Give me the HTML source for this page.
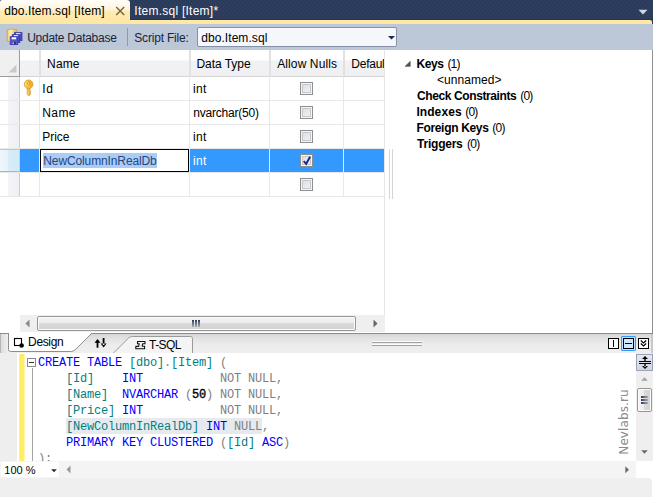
<!DOCTYPE html>
<html><head><meta charset="utf-8"><title>dbo.Item.sql [Item]</title>
<style>
html,body{margin:0;padding:0;}
body{width:653px;height:497px;overflow:hidden;background:#fff;position:relative;font-family:"Liberation Sans",sans-serif;font-size:12px;color:#000;}
#root{position:absolute;left:0;top:0;width:653px;height:497px;overflow:hidden;}
.a{position:absolute;}
.t{position:absolute;white-space:nowrap;line-height:14px;height:14px;font-size:12px;}
.b{font-weight:bold;}
/* top tabs */
#tabbar{left:0;top:0;width:653px;height:24px;background-color:#2b3b5c;}
#tab1{left:0;top:0;width:130px;height:20px;background:linear-gradient(#fffdf8 0,#fff9ea 25%,#fff3d6 50%,#ffeab2 55%,#ffe8a6 100%);border-top-right-radius:3px;border-top-left-radius:2px;}
#ystrip{left:0;top:20px;width:652px;height:4px;background:#ffe8a6;border-top-right-radius:2px;}
#toolbar{left:0;top:24px;width:653px;height:26px;background:#bcc7d8;}
#combo{left:197px;top:27px;width:198px;height:18px;border:1px solid #8591a8;background:#f5f7fb;border-radius:2px;}
/* grid */
.hl{position:absolute;height:1px;background:#e8e8e8;}
.vl{position:absolute;width:1px;background:#e8e8e8;}
.cb{position:absolute;width:11px;height:11px;border:1px solid #8e8f8f;background:#f4f4f4;box-shadow:inset 0 0 0 1px #f4f4f4, inset 0 0 0 2px #c4c7cb;background:linear-gradient(135deg,#d8dbdf,#f6f6f6);}
/* code */
.c{position:absolute;left:37.9px;white-space:pre;font-family:"Liberation Mono",monospace;font-size:12px;letter-spacing:-0.2px;line-height:16px;height:16px;}
.k{color:#0000ff}.i{color:#008080}.g{color:#808080}
</style></head><body><div id="root">

<!-- top document tabs -->
<div class="a" id="tabbar"></div>
<svg class="a" style="left:0;top:0" width="653" height="20" viewBox="0 0 653 20"><defs><pattern id="dots" width="4" height="4" patternUnits="userSpaceOnUse"><rect width="4" height="4" fill="#2b3b5c"/><rect x="1" y="1" width="1" height="1" fill="#35486c"/><rect x="3" y="3" width="1" height="1" fill="#35486c"/></pattern></defs><rect width="653" height="20" fill="url(#dots)"/><rect y="19" width="653" height="1" fill="#24355b"/></svg>
<div class="a" id="tab1"></div>
<div class="a" id="ystrip"></div>
<span class="t" id="t1" style="left:4.2px;top:4px;letter-spacing:0.1px;">dbo.Item.sql [Item]</span>
<svg class="a" style="left:115px;top:6px" width="11" height="10" viewBox="0 0 11 10"><path d="M1.2 1 L9.2 9 M9.2 1 L1.2 9" stroke="#75643f" stroke-width="1.4" fill="none"/></svg>
<span class="t" id="t2" style="left:134.3px;top:4px;color:#fff;letter-spacing:0.25px;">Item.sql [Item]*</span>
<svg class="a" style="left:638px;top:9px" width="10" height="6" viewBox="0 0 10 6"><path d="M0.5 0.8 H9.5 L5 5.4 Z" fill="#ced6e4"/></svg>

<!-- toolbar -->
<div class="a" id="toolbar"></div>
<svg class="a" style="left:6px;top:28px" width="18" height="18" viewBox="6 28 18 18">
  <defs><linearGradient id="cy" x1="0" y1="0" x2="1" y2="0"><stop offset="0" stop-color="#f6c85a"/><stop offset="0.35" stop-color="#fff0b4"/><stop offset="1" stop-color="#e9b23a"/></linearGradient></defs>
  <path d="M7.2 29.6 Q12 28.6 16.8 29.6 V41 Q12 43.6 7.2 41 Z" fill="url(#cy)" stroke="#d1a03a" stroke-width="0.8"/>
  <g transform="translate(0,-0.4)">
   <rect x="14.5" y="33" width="7.5" height="8" fill="#4b4dc4" stroke="#3a3aa6" stroke-width="0.8"/>
   <rect x="16" y="33.6" width="4.2" height="1.8" fill="#fff"/>
   <rect x="12.3" y="35" width="7.5" height="8" fill="#4b4dc4" stroke="#3a3aa6" stroke-width="0.8"/>
   <rect x="13.8" y="35.6" width="4.2" height="1.8" fill="#fff"/>
   <rect x="10.2" y="37" width="7.6" height="8" fill="#5557cc" stroke="#3a3aa6" stroke-width="0.8"/>
   <rect x="11.7" y="37.7" width="4.4" height="2" fill="#fff"/>
   <rect x="11.9" y="42.2" width="4" height="2.4" fill="#2a2c86"/>
   <rect x="12.4" y="42.8" width="1.6" height="1.4" fill="#dfe3f5"/>
  </g>
</svg>
<span class="t" id="t3" style="left:27.2px;top:31px;color:#1b2436;letter-spacing:-0.27px;">Update Database</span>
<div class="a" style="left:127px;top:28px;width:1px;height:18px;background:#8d99ad;"></div>
<span class="t" id="t4" style="left:134.3px;top:31px;color:#1b2436;letter-spacing:-0.2px;">Script File:</span>
<div class="a" id="combo"></div>
<span class="t" id="t5" style="left:201.2px;top:31px;letter-spacing:0.07px;">dbo.Item.sql</span>
<svg class="a" style="left:388px;top:36px" width="7" height="4" viewBox="0 0 7 4"><path d="M0 0 H7 L3.5 3.6 Z" fill="#1b2a47"/></svg>

<!-- designer area -->
<div class="a" style="left:0;top:50px;width:652px;height:283px;background:#fff;"></div>
<div class="a" style="left:652px;top:50px;width:1px;height:283px;background:#8f8f8f;"></div>

<!-- grid header -->
<div class="a" style="left:0;top:50px;width:384px;height:26px;background:linear-gradient(#ffffff 0,#ffffff 38%,#f2f2f5 42%,#f0f0f3 100%);"></div>
<div class="a" style="left:0;top:50px;width:19px;height:26px;background:#f0f0f0;border-right:1px solid #9c9c9c;border-bottom:1px solid #9c9c9c;box-sizing:border-box;width:20px;height:27px;"></div>
<svg class="a" style="left:8px;top:64px" width="9" height="9" viewBox="0 0 9 9"><path d="M8.5 0.5 V8.5 H0.5 Z" fill="#c9c9c9"/></svg>
<div class="hl" style="left:20px;top:76px;width:364px;background:#d5d5d5;"></div>
<!-- row header column -->
<div class="a" style="left:0;top:77px;width:19px;height:119px;background:linear-gradient(90deg,#ffffff 0,#ffffff 40%,#f3f4f6 44%,#eff0f3 100%);"></div>
<div class="vl" style="left:19px;top:77px;height:120px;background:#cdcdcd;"></div>
<!-- vertical column lines -->
<div class="vl" style="left:39px;top:50px;height:147px;"></div>
<div class="vl" style="left:189px;top:50px;height:147px;"></div>
<div class="vl" style="left:269px;top:50px;height:147px;"></div>
<div class="vl" style="left:343px;top:50px;height:147px;"></div>
<div class="a" style="left:39px;top:50px;width:2px;height:26px;background:#e1e1e4;"></div><div class="a" style="left:189px;top:50px;width:2px;height:26px;background:#e1e1e4;"></div><div class="a" style="left:269px;top:50px;width:2px;height:26px;background:#e1e1e4;"></div><div class="a" style="left:343px;top:50px;width:2px;height:26px;background:#e1e1e4;"></div>
<div class="vl" style="left:384px;top:50px;height:265px;background:#e6e6e6;"></div>
<!-- row lines -->
<div class="hl" style="left:0;top:100px;width:384px;"></div>
<div class="hl" style="left:0;top:124px;width:384px;"></div>
<div class="hl" style="left:0;top:148px;width:384px;"></div>
<div class="hl" style="left:0;top:172px;width:384px;"></div>
<div class="hl" style="left:0;top:196px;width:384px;"></div>

<!-- selected row -->
<div class="a" style="left:0;top:149px;width:19px;height:23px;background:linear-gradient(90deg,#eef7fd 0,#e6f3fb 40%,#d6ecf8 45%,#d3eaf7 100%);border-top:1px solid #9ad2f2;border-bottom:1px solid #7cc3ee;box-sizing:border-box;"></div>
<div class="a" style="left:20px;top:149px;width:19px;height:23px;background:#3399ff;"></div>
<div class="a" style="left:190px;top:149px;width:79px;height:23px;background:#3399ff;"></div>
<div class="a" style="left:270px;top:149px;width:73px;height:23px;background:#3399ff;"></div>
<div class="a" style="left:344px;top:149px;width:40px;height:23px;background:#3399ff;"></div>
<div class="a" style="left:40px;top:149px;width:149px;height:23px;border:1px solid #000;background:#fff;box-sizing:border-box;"></div>
<div class="a" style="left:43px;top:153px;width:114px;height:15px;background:#a9cdf6;"></div>

<!-- header text -->
<span class="t" id="h1" style="left:47.1px;top:57px;letter-spacing:0.12px;">Name</span>
<span class="t" id="h2" style="left:196.4px;top:57px;letter-spacing:-0.04px;">Data Type</span>
<span class="t" id="h3" style="left:277.2px;top:57px;letter-spacing:0.11px;">Allow Nulls</span>
<div class="a" style="left:345px;top:51px;width:39px;height:25px;overflow:hidden;"><span class="t" id="h4" style="left:6.3px;top:6px;letter-spacing:-0.25px;">Default Value</span></div>

<!-- key icon -->
<svg class="a" style="left:22px;top:79px" width="14" height="19" viewBox="22 79 14 19">
  <defs><linearGradient id="kg" x1="0" y1="0" x2="1" y2="0"><stop offset="0" stop-color="#ffdf7e"/><stop offset="0.5" stop-color="#fbbd2c"/><stop offset="1" stop-color="#f0a81c"/></linearGradient></defs>
  <path d="M27.2 88.3 V94.3 L28.6 95.9 L29.9 94.9 V94 L31 93.4 L29.9 92.7 V92.2 L31 91.5 L29.9 90.9 V88.3 Z" fill="url(#kg)" stroke="#cf9422" stroke-width="0.7"/>
  <circle cx="28.6" cy="84.3" r="4.3" fill="url(#kg)" stroke="#d59a26" stroke-width="0.8"/>
  <circle cx="28.6" cy="83.2" r="1.05" fill="#fffdf0" stroke="#8a6414" stroke-width="0.5"/>
</svg>

<!-- rows text -->
<span class="t" id="r1" style="left:42.2px;top:82px;letter-spacing:0.7px;">Id</span>
<span class="t" id="r2" style="left:42.2px;top:106px;letter-spacing:0.45px;">Name</span>
<span class="t" id="r3" style="left:42.2px;top:130px;letter-spacing:0px;">Price</span>
<span class="t" id="r4" style="left:43.3px;top:154px;color:#27457f;letter-spacing:-0.12px;">NewColumnInRealDb</span>
<span class="t" id="d1" style="left:193.1px;top:82px;letter-spacing:0.3px;">int</span>
<span class="t" id="d2" style="left:193.2px;top:106px;letter-spacing:-0.2px;">nvarchar(50)</span>
<span class="t" id="d3" style="left:193.1px;top:130px;letter-spacing:0.3px;">int</span>
<span class="t" id="d4" style="left:193.1px;top:154px;color:#fff;letter-spacing:0.3px;">int</span>

<!-- checkboxes -->
<div class="cb" style="left:300px;top:82px;"></div>
<div class="cb" style="left:300px;top:106px;"></div>
<div class="cb" style="left:300px;top:130px;"></div>
<div class="cb" style="left:300px;top:154px;"></div>
<svg class="a" style="left:302px;top:156px" width="10" height="10" viewBox="0 0 10 10"><path d="M1.7 5.1 L4.2 7.8 L8.1 0.8" stroke="#22228c" stroke-width="1.9" fill="none"/></svg>
<div class="cb" style="left:300px;top:178px;"></div>

<!-- splitter grip -->
<div class="a" style="left:389px;top:149px;width:1px;height:50px;background:#d4d4da;"></div>
<div class="a" style="left:392px;top:149px;width:1px;height:50px;background:#d4d4da;"></div>

<!-- right tree -->
<svg class="a" style="left:404px;top:60px" width="8" height="8" viewBox="0 0 8 8"><path d="M6.2 1.4 V6.3 H1.2 Z" fill="#555" stroke="#3c3c3c" stroke-width="0.6"/></svg>
<span class="t b" id="k1" style="left:416.4px;top:57px;letter-spacing:-0.4px;">Keys</span><span class="t" id="k1n" style="left:447.4px;top:57px;letter-spacing:-0.8px;">(1)</span>
<span class="t" id="k2" style="left:437px;top:72.5px;letter-spacing:0.05px;">&lt;unnamed&gt;</span>
<span class="t b" id="k3" style="left:417.1px;top:88.5px;letter-spacing:-0.4px;">Check Constraints</span><span class="t" id="k3n" style="left:520.2px;top:88.5px;letter-spacing:-0.8px;">(0)</span>
<span class="t b" id="k4" style="left:416.4px;top:104.5px;letter-spacing:0.08px;">Indexes</span><span class="t" id="k4n" style="left:465.3px;top:104.5px;letter-spacing:-0.8px;">(0)</span>
<span class="t b" id="k5" style="left:416.4px;top:120.5px;letter-spacing:-0.32px;">Foreign Keys</span><span class="t" id="k5n" style="left:492.2px;top:120.5px;letter-spacing:-0.7px;">(0)</span>
<span class="t b" id="k6" style="left:417.1px;top:136.5px;letter-spacing:-0.24px;">Triggers</span><span class="t" id="k6n" style="left:467px;top:136.5px;letter-spacing:-0.7px;">(0)</span>

<!-- grid horizontal scrollbar -->
<div class="a" style="left:20px;top:315px;width:365px;height:17px;background:#efefef;"></div>
<svg class="a" style="left:25px;top:319px" width="5" height="9" viewBox="0 0 5 9"><path d="M4.5 0.5 V8.5 L0.5 4.5 Z" fill="#888"/></svg>
<svg class="a" style="left:373px;top:319px" width="5" height="9" viewBox="0 0 5 9"><path d="M0.5 0.5 V8.5 L4.5 4.5 Z" fill="#666"/></svg>
<div class="a" style="left:37px;top:316px;width:319px;height:15px;box-sizing:border-box;border:1px solid #979797;border-radius:2px;background:linear-gradient(#f4f4f4,#ececec 45%,#dadada 50%,#d2d2d2);box-shadow:inset 0 0 0 1px #fafafa;"></div>
<div class="a" style="left:192px;top:320px;width:2px;height:7px;background:linear-gradient(#2c3856,#7b8090 60%,#a9acb4);"></div><div class="a" style="left:195px;top:320px;width:2px;height:7px;background:linear-gradient(#2c3856,#7b8090 60%,#a9acb4);"></div><div class="a" style="left:198px;top:320px;width:2px;height:7px;background:linear-gradient(#2c3856,#7b8090 60%,#a9acb4);"></div>

<!-- bottom border of designer -->


<!-- designer/T-SQL tab strip -->
<div class="a" style="left:0;top:333px;width:653px;height:20px;background:linear-gradient(#8c8c8c 0,#8c8c8c 1px,#d6d6d6 1px,#e2e2e2 5px,#ececec 12px,#efefef 20px);"></div>
<svg class="a" style="left:0;top:333px" width="210" height="20" viewBox="0 0 210 20">
  <defs><linearGradient id="lg1" x1="0" y1="0" x2="1" y2="0"><stop offset="0" stop-color="#9a9a9a"/><stop offset="0.15" stop-color="#dcdcdc"/><stop offset="1" stop-color="#f0f0f0"/></linearGradient></defs>
  <rect x="0" y="1" width="8" height="19" fill="url(#lg1)"/>
  <path d="M8 -1 H92.4 L76.3 15.4 Q74 18 71 18.5 H10.5 Q8.5 18.5 8.5 16.5 Z" fill="#fff" stroke="none"/>
  <path d="M8.5 -1 V16.5 Q8.5 18.5 10.5 18.5 H71.5 Q74 18.3 76.2 15.8 L92 0" fill="none" stroke="#8e8e8e" stroke-width="1"/>
  <path d="M112.5 21 L128.6 5 Q130 3.5 132.5 3.5 H190.5 Q192.5 3.5 192.5 5.5 V21 Z" fill="#f4f4f5"/>
  <path d="M112.5 21 L128.6 5 Q130 3.5 132.5 3.5 H190.5 Q192.5 3.5 192.5 5.5 V21" fill="none" stroke="#9a9a9a" stroke-width="1"/>
  <!-- design icon -->
  <rect x="14.5" y="5.5" width="7" height="7" fill="#fff" stroke="#000" stroke-width="1.1"/>
  <circle cx="21.6" cy="12.5" r="2.3" fill="#000"/>
  <!-- swap arrows -->
  <path d="M96.6 8 H98.4 V14.8 H96.6 Z M94.5 9.8 L97.5 5.9 L100.5 9.8 Z" fill="#000"/>
  <path d="M102.7 5.1 H104.5 V12 H102.7 Z M100.6 10.5 L103.6 14.4 L106.6 10.5 Z" fill="#000"/>
  <!-- tsql icon -->
  <path d="M137.5 8.5 H145 V10.8 H142.6 L142.2 13.2 H144.6 V15.8 H135.8 V13.4 H138.6 L139.2 10.8 H137.5 Z" fill="#f2f2f2" stroke="#111" stroke-width="1.1" stroke-linejoin="round"/>
</svg>
<span class="t" id="b1" style="left:28.1px;top:335px;letter-spacing:-0.36px;">Design</span>
<span class="t" id="b2" style="left:149.1px;top:338px;letter-spacing:-0.6px;">T-SQL</span>
<!-- splitter grip horizontal -->
<div class="a" style="left:372px;top:341px;width:50px;height:1px;background:#fbfbfb;"></div><div class="a" style="left:372px;top:342px;width:50px;height:1px;background:#a2a2a2;"></div>
<div class="a" style="left:372px;top:344px;width:50px;height:1px;background:#fbfbfb;"></div><div class="a" style="left:372px;top:345px;width:50px;height:1px;background:#a2a2a2;"></div>
<div class="a" style="left:651px;top:334px;width:2px;height:19px;background:#c8c8c8;"></div>
<!-- pane buttons -->
<div class="a" style="left:608px;top:338px;width:11px;height:11px;box-sizing:border-box;border:1px solid #000;background:#fff;"></div>
<div class="a" style="left:613px;top:340px;width:1px;height:7px;background:#000;"></div>
<div class="a" style="left:621px;top:336px;width:15px;height:15px;box-sizing:border-box;border:1px solid #3399ff;background:#c4e0ff;border-radius:1px;"></div>
<div class="a" style="left:623px;top:338px;width:11px;height:11px;box-sizing:border-box;border:1px solid #000;background:#cfe6ff;"></div>
<div class="a" style="left:625px;top:343px;width:7px;height:1px;background:#000;"></div>
<div class="a" style="left:638px;top:338px;width:11px;height:11px;box-sizing:border-box;border:1px solid #000;background:#fff;"></div>
<svg class="a" style="left:640px;top:340px" width="7" height="7" viewBox="0 0 7 7"><path d="M0.8 0.5 L3.5 3 L6.2 0.5 M0.8 3.5 L3.5 6 L6.2 3.5" stroke="#000" stroke-width="1.2" fill="none"/></svg>

<!-- code editor -->
<div class="a" style="left:0;top:353px;width:636px;height:108px;background:#fff;"></div>
<div class="a" style="left:0;top:353px;width:17px;height:108px;background:#eeeeef;"></div>
<div class="a" style="left:19px;top:354px;width:6px;height:107px;background:linear-gradient(90deg,#f3eba6 0,#f3eba6 1px,#ffee62 1px,#ffee62 5px,#fff7b0 5px);"></div>
<div class="a" style="left:27px;top:358px;width:9px;height:9px;box-sizing:border-box;border:1px solid #8a8a8a;background:#fff;"></div>
<div class="a" style="left:29px;top:362px;width:5px;height:1px;background:#333;"></div>
<div class="a" style="left:32px;top:368px;width:1px;height:93px;background:#a5a5a5;"></div>
<div class="a" style="left:66px;top:418px;width:196px;height:16px;background:#e6eaee;"></div>
<div class="a" style="left:0;top:353px;width:636px;height:108px;overflow:hidden;">
<div class="c" style="top:2px;"><span class="k">CREATE TABLE</span> <span class="i">[dbo]</span><span class="g">.</span><span class="i">[Item]</span> <span class="g">(</span></div>
<div class="c" style="top:18px;">    <span class="i">[Id]</span>    <span class="k">INT</span>           <span class="g">NOT NULL,</span></div>
<div class="c" style="top:34px;">    <span class="i">[Name]</span>  <span class="k">NVARCHAR</span> <span class="g">(</span><span style="-webkit-text-stroke:0.35px #000;">50</span><span class="g">)</span> <span class="g">NOT NULL,</span></div>
<div class="c" style="top:50px;">    <span class="i">[Price]</span> <span class="k">INT</span>           <span class="g">NOT NULL,</span></div>
<div class="c" style="top:66px;">    <span class="i">[NewColumnInRealDb]</span> <span class="k">INT</span> <span class="g">NULL,</span></div>
<div class="c" style="top:82px;">    <span class="k">PRIMARY KEY CLUSTERED</span> <span class="g">(</span><span class="i">[Id]</span> <span class="k">ASC</span><span class="g">)</span></div>
<div class="c" style="top:98px;"><span class="g">);</span></div>
</div>
<!-- watermark -->
<div class="a" style="left:624px;top:422px;width:0;height:0;"><span class="t" id="wm" style="left:0;top:0;transform:translate(-50%,-50%) rotate(-90deg);font-family:'DejaVu Sans',sans-serif;font-size:12px;color:#8a8a8a;letter-spacing:0.1px;">Nevlabs.ru</span></div>

<!-- vertical scrollbar -->
<div class="a" style="left:636px;top:353px;width:17px;height:108px;background:#efefef;"></div>
<div class="a" style="left:636px;top:354px;width:17px;height:17px;box-sizing:border-box;border:1px solid #9aa2b8;background:linear-gradient(#e3e7ef,#d0d6e3);"></div>
<svg class="a" style="left:637px;top:355px" width="16" height="15" viewBox="0 0 16 15"><path d="M2 6.5 H14 M2 8.5 H14" stroke="#000" stroke-width="1" fill="none"/><path d="M7.3 3 H8.7 V6 H7.3 Z M7.3 9 H8.7 V12 H7.3 Z M5 4 L8 0.9 L11 4 Z M5 11 L8 14.1 L11 11 Z" fill="#000"/></svg>
<svg class="a" style="left:641px;top:377px" width="7" height="4" viewBox="0 0 7 4"><path d="M0.2 3.8 H6.8 L3.5 0.2 Z" fill="#a2a2a2"/></svg>
<div class="a" style="left:637px;top:388px;width:15px;height:24px;box-sizing:border-box;border:1px solid #979797;border-radius:2px;background:linear-gradient(90deg,#f4f4f4,#ececec 45%,#dadada 50%,#d2d2d2);box-shadow:inset 0 0 0 1px #fafafa;"></div>
<div class="a" style="left:641px;top:396px;width:7px;height:2px;background:linear-gradient(90deg,#2c3856,#7b8090 60%,#a9acb4);"></div><div class="a" style="left:641px;top:399px;width:7px;height:2px;background:linear-gradient(90deg,#2c3856,#7b8090 60%,#a9acb4);"></div><div class="a" style="left:641px;top:402px;width:7px;height:2px;background:linear-gradient(90deg,#2c3856,#7b8090 60%,#a9acb4);"></div>
<svg class="a" style="left:641px;top:450px" width="7" height="4" viewBox="0 0 7 4"><path d="M0.2 0.2 H6.8 L3.5 3.8 Z" fill="#6a6a6a"/></svg>

<!-- bottom bar -->
<div class="a" style="left:0;top:461px;width:636px;height:17px;background:#f4f4f4;"></div>
<div class="a" style="left:1px;top:462px;width:58px;height:15px;background:#fff;"></div>
<span class="t" id="z1" style="left:4.3px;top:463px;font-size:11px;letter-spacing:0px;">100 %</span>
<svg class="a" style="left:51px;top:469px" width="6" height="4" viewBox="0 0 6 4"><path d="M0.2 0.2 H5.8 L3 3.3 Z" fill="#1b2a47"/></svg>
<svg class="a" style="left:66px;top:465px" width="5" height="9" viewBox="0 0 5 9"><path d="M4.5 0.5 V8.5 L0.5 4.5 Z" fill="#999"/></svg>
<svg class="a" style="left:625px;top:466px" width="5" height="8" viewBox="0 0 5 8"><path d="M0.3 0.3 V7.3 L4 3.8 Z" fill="#6a6a6a"/></svg>
<div class="a" style="left:0;top:478px;width:652px;height:19px;background:#efefef;border-top-right-radius:4px;"></div>

</div></body></html>
